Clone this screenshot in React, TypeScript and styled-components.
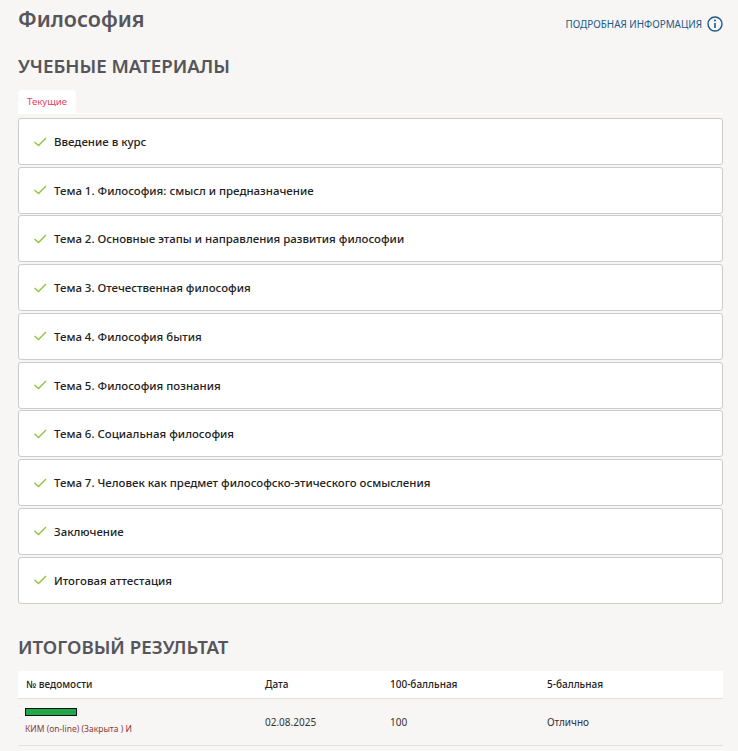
import React from "react"
import styled, { createGlobalStyle } from "styled-components"

const GlobalStyle = createGlobalStyle`
	html, body {
		margin: 0;
		padding: 0;
		background: #f7f6f5;
		font-family: "Noto Sans", "Open Sans", sans-serif;
		overflow: hidden;
	}
`

const Page = styled.div`
	width: 738px;
	height: 751px;
	box-sizing: border-box;
	padding: 0 15px 0 18px;
	overflow: hidden;
`

const Header = styled.header`
	height: 53px;
	display: flex;
	align-items: flex-start;
	justify-content: space-between;
`

const Title = styled.h1`
	margin: 4px 0 0;
	font-size: 21.5px;
	line-height: 30px;
	font-weight: 600;
	color: #55555a;
`

const InfoLink = styled.a`
	display: flex;
	align-items: center;
	gap: 5px;
	margin-top: 15px;
	font-size: 9.9px;
	line-height: 18px;
	color: #1a5a8a;
	text-decoration: none;
	text-transform: uppercase;
`

const SectionTitle = styled.h2`
	margin: 0;
	font-size: 18.7px;
	line-height: 26px;
	font-weight: 600;
	color: #55555a;
	text-transform: uppercase;
`

const Tabs = styled.div`
	display: flex;
	margin-top: 11px;
	height: 23px;
	border-bottom: 1px solid #ffffff;
`

const Tab = styled.div`
	padding: 0 9px;
	background: #ffffff;
	border-radius: 4px 4px 0 0;
	font-size: 9.6px;
	line-height: 23px;
	color: #e8405f;
`

const List = styled.div`
	display: flex;
	flex-direction: column;
	gap: 1.74px;
	margin-top: 4px;
`

const Item = styled.div`
	height: 47px;
	box-sizing: border-box;
	display: flex;
	align-items: center;
	gap: 7px;
	padding: 0 15px;
	background: #ffffff;
	border: 1px solid #cccccc;
	border-radius: 3px;
	font-size: 11.45px;
	font-weight: 500;
	color: #222222;
`

const ResultSection = styled.section`
	margin-top: 30px;
`

const Table = styled.div`
	margin-top: 11px;
	font-size: 10px;
	color: #333333;
`

const HeadRow = styled.div`
	display: grid;
	grid-template-columns: 239px 125px 157px 1fr;
	align-items: center;
	height: 28px;
	box-sizing: border-box;
	background: #ffffff;
	border-bottom: 1px solid #e2e1de;
	font-weight: 500;
	color: #222222;
`

const BodyRow = styled(HeadRow)`
	height: 47px;
	background: transparent;
	font-weight: 400;
	color: #333333;
`

const Cell = styled.div`
	padding-left: 8px;
`

const SheetCell = styled(Cell)`
	padding-left: 7px;
`

const Bar = styled.div`
	width: 50px;
	height: 6px;
	background: #22a84a;
	border: 1px solid #111111;
`

const SheetName = styled.div`
	margin-top: 7px;
	font-size: 8.5px;
	line-height: 12px;
	color: #8a3b3b;
`

const items = [
	"Введение в курс",
	"Тема 1. Философия: смысл и предназначение",
	"Тема 2. Основные этапы и направления развития философии",
	"Тема 3. Отечественная философия",
	"Тема 4. Философия бытия",
	"Тема 5. Философия познания",
	"Тема 6. Социальная философия",
	"Тема 7. Человек как предмет философско-этического осмысления",
	"Заключение",
	"Итоговая аттестация",
]

const CheckIcon = () => (
	<svg width="13" height="12" viewBox="0 0 13 12" fill="none">
		<path d="M0.5 6 L4.5 9.5 L12 2" stroke="#8cc63f" strokeWidth="1.4" />
	</svg>
)

const InfoIcon = () => (
	<svg width="16" height="16" viewBox="0 0 16 16" fill="none">
		<circle cx="8" cy="8" r="7" stroke="#1a5a8a" strokeWidth="1.4" />
		<path d="M8 7 V12" stroke="#1a5a8a" strokeWidth="1.6" />
		<circle cx="8" cy="4.6" r="1" fill="#1a5a8a" />
	</svg>
)

const App = () => (
	<Page>
		<GlobalStyle />
		<Header>
			<Title>Философия</Title>
			<InfoLink href="#">
				Подробная информация
				<InfoIcon />
			</InfoLink>
		</Header>
		<SectionTitle>Учебные материалы</SectionTitle>
		<Tabs>
			<Tab>Текущие</Tab>
		</Tabs>
		<List>
			{items.map(item => (
				<Item key={item}>
					<CheckIcon />
					{item}
				</Item>
			))}
		</List>
		<ResultSection>
			<SectionTitle>Итоговый результат</SectionTitle>
			<Table>
				<HeadRow>
					<Cell>№ ведомости</Cell>
					<Cell>Дата</Cell>
					<Cell>100-балльная</Cell>
					<Cell>5-балльная</Cell>
				</HeadRow>
				<BodyRow>
					<SheetCell>
						<Bar />
						<SheetName>КИМ (on-line) (Закрыта ) И</SheetName>
					</SheetCell>
					<Cell>02.08.2025</Cell>
					<Cell>100</Cell>
					<Cell>Отлично</Cell>
				</BodyRow>
			</Table>
		</ResultSection>
	</Page>
)

export default App
